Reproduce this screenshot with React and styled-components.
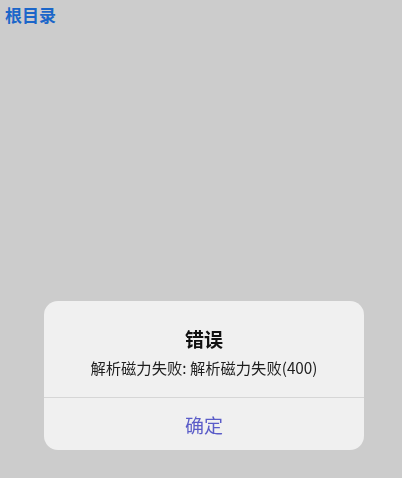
import React from "react";
import styled, { createGlobalStyle } from "styled-components";

const Global = createGlobalStyle`
  html, body { margin: 0; padding: 0; }
  body {
    background: #cccccc;
    font-family: "Noto Sans CJK SC", "Noto Sans", sans-serif;
  }
`;

const Page = styled.div`
  min-height: 100vh;
  background: #cccccc;
`;

const Header = styled.div`
  padding: 6px 5px 0;
  font-size: 17px;
  line-height: 18px;
  font-weight: 700;
  color: #1b66c9;
`;

const Overlay = styled.div`
  position: fixed;
  inset: 0;
  display: flex;
  justify-content: center;
  align-items: flex-end;
  padding: 0 0 28px 6px;
`;

const Dialog = styled.div`
  width: 320px;
  background: #f0f0f0;
  border-radius: 14px;
  overflow: hidden;
  display: flex;
  flex-direction: column;
`;

const Body = styled.div`
  height: 97px;
  box-sizing: border-box;
  padding-top: 26px;
  display: flex;
  flex-direction: column;
  align-items: center;
  border-bottom: 1px solid #d6d6d6;
`;

const Title = styled.div`
  font-size: 19px;
  line-height: 24px;
  font-weight: 700;
  color: #111;
`;

const Message = styled.div`
  margin-top: 6px;
  font-size: 15.3px;
  line-height: 20px;
  color: #1e1e1e;
`;

const Button = styled.button`
  height: 52px;
  border: none;
  background: transparent;
  font-family: inherit;
  font-size: 19px;
  color: #5a5cc8;
  padding: 0;
  cursor: pointer;
`;

export default function App() {
  return (
    <Page>
      <Global />
      <Header>根目录</Header>
      <Overlay>
        <Dialog>
          <Body>
            <Title>错误</Title>
            <Message>解析磁力失败: 解析磁力失败(400)</Message>
          </Body>
          <Button>确定</Button>
        </Dialog>
      </Overlay>
    </Page>
  );
}
